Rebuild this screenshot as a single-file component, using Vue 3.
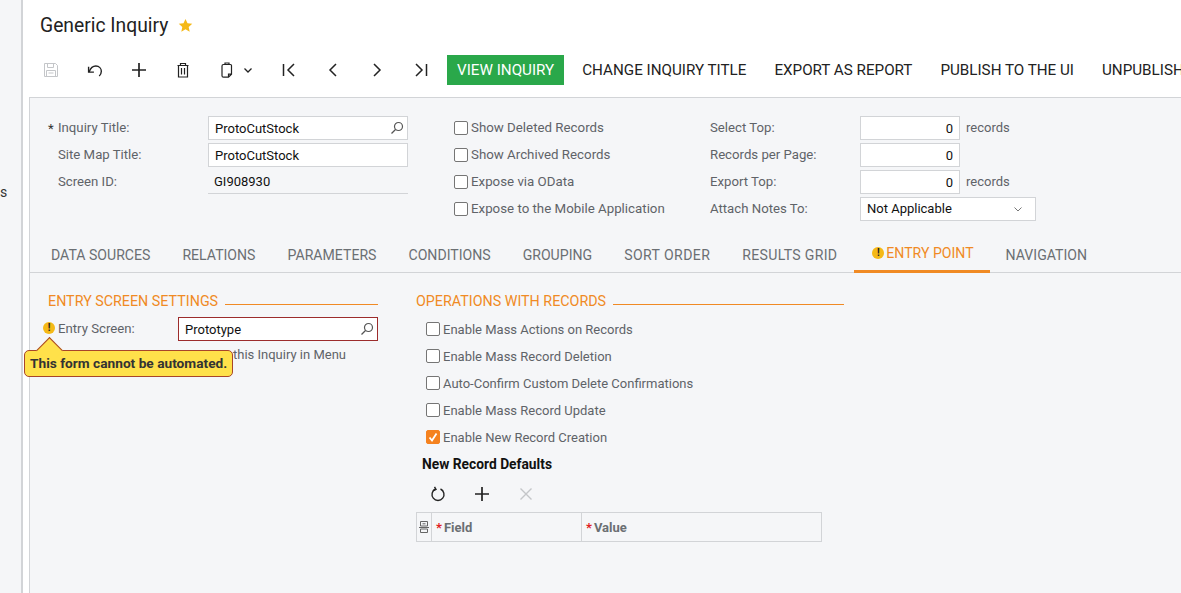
<template>
  <div class="page">
    <aside class="side"><span class="side-s">s</span></aside>
    <main class="main">
      <header class="title-row">
        <h1>Generic Inquiry</h1>
        <svg class="star" viewBox="0 0 24 24" width="15" height="15"><path d="M12 1.500l3.200 7 7.600.8-5.700 5.100 1.600 7.600L12 18.100 5.300 22l1.600-7.600L1.200 9.300l7.600-.8z" fill="#f5b916" /></svg>
      </header>

      <div class="toolbar">
        <button class="tb disabled">
          <svg viewBox="0 0 16 16" width="16" height="16" fill="none" stroke="#c4c6c9" stroke-width="1"><path d="M1.500 1.500h11l2 2v11h-13z" /><path d="M4.500 1.500v4h6v-4M3.500 14.500v-6h9v6M5.500 11h5" /></svg>
        </button>
        <button class="tb">
          <svg viewBox="0 0 16 16" width="17" height="17" fill="none" stroke="#222" stroke-width="1.300"><path d="M1.500 4.500v5h5" /><path d="M2 9.300C3.300 5.900 5.300 3.800 8.300 3.800c3.200 0 5.200 2.300 5.200 5 0 1.900-.8 3.300-2 4.400" /></svg>
        </button>
        <button class="tb">
          <svg viewBox="0 0 16 16" width="16" height="16" fill="none" stroke="#222" stroke-width="1.700"><path d="M8 1v14M1 8h14" /></svg>
        </button>
        <button class="tb">
          <svg viewBox="0 0 16 16" width="16" height="16" fill="none" stroke="#222" stroke-width="1.200"><path d="M2.500 3.500h11M5.500 3V1.500h5V3M3.500 3.500V15h9V3.500M6.500 6v6.500M9.500 6v6.500" /></svg>
        </button>
        <button class="tb tb-split">
          <svg viewBox="0 0 16 16" width="16" height="16" fill="none" stroke="#222" stroke-width="1.200"><path d="M4.500 2.500h7c.6 0 1 .4 1 1v8.700l-3 3H4.500c-.9 0-1.500-.6-1.500-1.500V4c0-.9.600-1.500 1.500-1.500zM6 2.500V1h4v1.500M9.500 15.200v-3h3" /></svg>
          <svg viewBox="0 0 10 10" width="10" height="10" fill="none" stroke="#222" stroke-width="1.300"><path d="M1.500 3.500L5 7l3.500-3.500" /></svg>
        </button>
        <button class="tb">
          <svg viewBox="0 0 16 16" width="16" height="16" fill="none" stroke="#222" stroke-width="1.500"><path d="M2.500 2v12M13 2L7 8l6 6" /></svg>
        </button>
        <button class="tb">
          <svg viewBox="0 0 16 16" width="16" height="16" fill="none" stroke="#222" stroke-width="1.500"><path d="M11 2L5 8l6 6" /></svg>
        </button>
        <button class="tb">
          <svg viewBox="0 0 16 16" width="16" height="16" fill="none" stroke="#222" stroke-width="1.500"><path d="M5 2l6 6-6 6" /></svg>
        </button>
        <button class="tb">
          <svg viewBox="0 0 16 16" width="16" height="16" fill="none" stroke="#222" stroke-width="1.500"><path d="M13.500 2v12M3 2l6 6-6 6" /></svg>
        </button>
        <button class="primary">VIEW INQUIRY</button>
        <button v-for="a in actions" :key="a" class="action">{{ a }}</button>
      </div>

      <section class="panel">
        <div class="form">
          <div class="col col-a">
            <div class="row"><label class="lbl req">Inquiry Title:</label>
              <div class="input wide">ProtoCutStock<svg class="lens" viewBox="0 0 14 14" width="14" height="14" fill="none" stroke="#555" stroke-width="1.200"><circle cx="8.500" cy="5.500" r="4" /><path d="M5.500 8.500L1.500 12.500" /></svg></div>
            </div>
            <div class="row"><label class="lbl">Site Map Title:</label><div class="input wide">ProtoCutStock</div></div>
            <div class="row"><label class="lbl">Screen ID:</label><div class="input wide plain">GI908930</div></div>
          </div>
          <div class="col col-b">
            <label v-for="c in topChecks" :key="c" class="check"><span class="box"></span>{{ c }}</label>
          </div>
          <div class="col col-c">
            <div v-for="n in numbers" :key="n.label" class="row">
              <label class="lbl">{{ n.label }}</label>
              <div class="input num">0</div>
              <span v-if="n.unit" class="unit">records</span>
            </div>
            <div class="row">
              <label class="lbl">Attach Notes To:</label>
              <div class="input select">Not Applicable
                <svg viewBox="0 0 10 10" width="10" height="10" fill="none" stroke="#777" stroke-width="1"><path d="M1.500 3.500L5 7l3.500-3.500" /></svg>
              </div>
            </div>
          </div>
        </div>

        <nav class="tabs">
          <a v-for="t in tabs" :key="t" class="tab" :class="{ active: t === 'ENTRY POINT' }">
            <span v-if="t === 'ENTRY POINT'" class="warn">!</span>{{ t }}
          </a>
        </nav>

        <div class="entry">
          <div class="entry-left">
            <h2 class="section">ENTRY SCREEN SETTINGS</h2>
            <div class="row entry-row">
              <span class="warn warn-field">!</span>
              <label class="lbl lbl-entry">Entry Screen:</label>
              <div class="input entry-input">Prototype<svg class="lens" viewBox="0 0 14 14" width="14" height="14" fill="none" stroke="#555" stroke-width="1.200"><circle cx="8.500" cy="5.500" r="4" /><path d="M5.500 8.500L1.500 12.500" /></svg></div>
            </div>
            <div class="menu-row">this Inquiry in Menu</div>
            <div class="tooltip">This form cannot be automated.</div>
          </div>

          <div class="entry-right">
            <h2 class="section">OPERATIONS WITH RECORDS</h2>
            <div class="ops">
              <label v-for="c in opChecks" :key="c" class="check"><span class="box"></span>{{ c }}</label>
              <label class="check"><span class="box on"><svg viewBox="0 0 12 12" width="12" height="12" fill="none" stroke="#fff" stroke-width="1.800"><path d="M2.500 6.500L5 9.500l4.500-7" /></svg></span>Enable New Record Creation</label>
            </div>
            <div class="defaults">New Record Defaults</div>
            <div class="grid-tools">
              <button class="gt">
                <svg viewBox="0 0 16 16" width="16" height="16" fill="none" stroke="#222" stroke-width="1.400"><path d="M5.500 3a6 6 0 1 0 5 0" /><path d="M4.500 .8L6 3.400 3.200 4.600" /></svg>
              </button>
              <button class="gt">
                <svg viewBox="0 0 16 16" width="16" height="16" fill="none" stroke="#222" stroke-width="1.700"><path d="M8 1v14M1 8h14" /></svg>
              </button>
              <button class="gt">
                <svg viewBox="0 0 16 16" width="16" height="16" fill="none" stroke="#c4c6c9" stroke-width="1.400"><path d="M2.500 2.500l11 11M13.500 2.500l-11 11" /></svg>
              </button>
            </div>
            <div class="table">
              <div class="th th-icon">
                <svg viewBox="0 0 12 12" width="12" height="12" fill="none" stroke="#666" stroke-width="1"><path d="M2.500 .5h7v4.500h-7zM1 6.500h10M2.500 8h7v3.500h-7zM4.500 2.800h3" /></svg>
              </div>
              <div class="th th-field"><i>*</i>Field</div>
              <div class="th th-value"><i>*</i>Value</div>
            </div>
          </div>
        </div>
      </section>
    </main>
  </div>
</template>

<script setup>
const actions = ["CHANGE INQUIRY TITLE", "EXPORT AS REPORT", "PUBLISH TO THE UI", "UNPUBLISH"];
const topChecks = ["Show Deleted Records", "Show Archived Records", "Expose via OData", "Expose to the Mobile Application"];
const numbers = [
  { label: "Select Top:", unit: true },
  { label: "Records per Page:", unit: false },
  { label: "Export Top:", unit: true },
];
const tabs = ["DATA SOURCES", "RELATIONS", "PARAMETERS", "CONDITIONS", "GROUPING", "SORT ORDER", "RESULTS GRID", "ENTRY POINT", "NAVIGATION"];
const opChecks = [
  "Enable Mass Actions on Records",
  "Enable Mass Record Deletion",
  "Auto-Confirm Custom Delete Confirmations",
  "Enable Mass Record Update",
];
</script>

<style>
html, body { margin: 0; height: 100%; overflow: hidden; background: #fff; }
</style>

<style scoped>
.page {
  display: flex;
  width: 1181px;
  height: 593px;
  overflow: hidden;
  font-family: Roboto, "Liberation Sans", sans-serif;
  font-size: 13px;
  color: #000;
}
.side {
  flex: 0 0 21px;
  background: #f5f6f8;
  border-right: 2px solid #d2d4d7;
  position: relative;
}
.side-s { position: absolute; left: 0; top: 184px; font-size: 14px; color: #333; }
.main { flex: 1; min-width: 0; display: flex; flex-direction: column; overflow: hidden; padding-left: 6px; }
.title-row { display: flex; align-items: center; height: 55px; padding: 0 0 5px 11px; gap: 10px; box-sizing: border-box; }
h1 { margin: 0; font-size: 19.300px; font-weight: 400; color: #222; }
.toolbar { display: flex; align-items: center; height: 30px; white-space: nowrap; flex: none; }
button { border: 0; background: none; padding: 0; font: inherit; cursor: pointer; }
.tb { flex: none; width: 44px; height: 30px; display: flex; align-items: center; justify-content: center; }
.tb-split { width: 62px; gap: 8px; }
.primary { flex: none; margin-left: 4px; height: 30px; padding: 0 10px; background: #2aa84a; color: #fff; font-size: 15.200px; }
.action { flex: none; padding: 0 14px; height: 30px; color: #222; font-size: 15.200px; }
.action:last-child { padding-right: 0; }
.primary + .action { margin-left: 4px; }
.panel {
  flex: 1;
  margin-top: 12px;
  background: #f5f6f8;
  border-top: 1px solid #d2d4d7;
  border-left: 1px solid #d2d4d7;
  min-width: 0;
}
.form { display: flex; padding-top: 18px; height: 142px; box-sizing: border-box; }
.row { display: flex; align-items: center; height: 24px; margin-bottom: 3px; }
.col-a { width: 424px; padding-left: 28px; box-sizing: border-box; flex: none; }
.col-b { width: 256px; flex: none; font-size: 13.300px; }
.col-b .check { box-sizing: border-box; padding-bottom: 1px; }
.lbl { width: 150px; flex: none; color: #5f6368; position: relative; padding-bottom: 2px; font-size: 13.200px; }
.req::before { content: "*"; position: absolute; left: -10px; top: 1px; color: #333; }
.input {
  background: #fff;
  border: 1px solid #d2d4d7;
  height: 24px;
  box-sizing: border-box;
  display: flex;
  align-items: center;
  padding: 0 6px;
  position: relative;
  color: #111;
}
.wide { width: 200px; }
.plain { background: none; border: 0; border-bottom: 1px solid #d2d4d7; }
.lens { position: absolute; right: 3px; top: 4px; }
.num { width: 100px; justify-content: flex-end; }
.unit { margin-left: 6px; color: #5f6368; padding-bottom: 2px; }
.select { width: 176px; justify-content: space-between; padding-right: 12px; padding-bottom: 1px; }
.check { display: flex; align-items: center; height: 24px; margin-bottom: 3px; color: #5f6368; }
.box {
  width: 14px;
  height: 14px;
  flex: none;
  box-sizing: border-box;
  margin-right: 3px;
  background: #fff;
  border: 1px solid #757575;
  border-radius: 2px;
  display: flex;
  align-items: center;
  justify-content: center;
}
.box.on { background: #f5821f; border-color: #f5821f; }
.tabs { display: flex; height: 33px; box-sizing: border-box; border-bottom: 1px solid #d2d4d7; padding-left: 5px; font-size: 14.100px; }
.tab { display: flex; align-items: center; padding: 0 16px 4px; height: 33px; box-sizing: border-box; color: #6b6f73; white-space: nowrap; }
.tab:nth-child(6) { letter-spacing: .4px; }
.tab:nth-child(7) { letter-spacing: .3px; }
.tab.active { color: #f08a24; border-bottom: 3px solid #f08a24; padding-bottom: 4px; margin-left: 1px; }
.warn {
  width: 12px;
  height: 12px;
  border-radius: 50%;
  background: #f5b916;
  color: #222;
  font-size: 10px;
  font-weight: 700;
  line-height: 12px;
  text-align: center;
  flex: none;
  margin: 0 2px;
}
.entry { display: flex; padding-top: 20px; }
.entry-left { width: 330px; margin-left: 18px; margin-right: 38px; flex: none; position: relative; }
.entry-right { width: 428px; flex: none; }
.section {
  margin: 0 0 8px;
  font-size: 14.300px;
  font-weight: 400;
  color: #f08a24;
  display: flex;
  align-items: center;
  gap: 7px;
  height: 16px;
}
.section::after { content: ""; flex: 1; height: 1px; background: #f08a24; margin-top: 7px; }
.entry-row { position: relative; margin-top: 2px; margin-bottom: 2px; }
.warn-field { position: absolute; left: -5px; top: 5px; margin: 0; }
.lbl-entry { margin-left: 10px; width: 120px; }
.entry-input { width: 200px; border-color: #9c2c2c; }
.menu-row { padding-left: 185px; height: 24px; line-height: 24px; color: #5f6368; }
.tooltip {
  position: absolute;
  left: -24px;
  top: 57px;
  z-index: 1;
  height: 27px;
  width: 209px;
  box-sizing: border-box;
  background: #ffe14a;
  border: 1px solid #a8452a;
  border-radius: 5px;
  font-weight: 700;
  font-size: 13.700px;
  color: #333;
  display: flex;
  align-items: center;
  padding-left: 5px;
  padding-bottom: 1px;
  white-space: nowrap;
}
.tooltip::before {
  content: "";
  position: absolute;
  left: 15px;
  top: -10px;
  z-index: -1;
  width: 18px;
  height: 18px;
  background: #ffe14a;
  border-left: 1px solid #a8452a;
  border-top: 1px solid #a8452a;
  transform: rotate(45deg);
}
.ops { padding-left: 10px; }
.defaults { font-weight: 700; font-size: 13.800px; color: #111; padding-left: 6px; height: 24px; display: flex; align-items: center; }
.grid-tools { display: flex; height: 36px; align-items: center; }
.gt { width: 44px; height: 30px; display: flex; align-items: center; justify-content: center; }
.table {
  display: flex;
  width: 406px;
  height: 30px;
  box-sizing: border-box;
  border: 1px solid #d2d4d7;
  color: #6b6f73;
  font-weight: 700;
}
.th { display: flex; align-items: center; box-sizing: border-box; border-right: 1px solid #d2d4d7; padding-left: 4px; }
.th i { color: #e02020; font-style: normal; margin-right: 2px; }
.th-icon { width: 15px; padding-left: 1px; }
.th-field { width: 150px; }
.th-value { flex: 1; border-right: 0; }
</style>
